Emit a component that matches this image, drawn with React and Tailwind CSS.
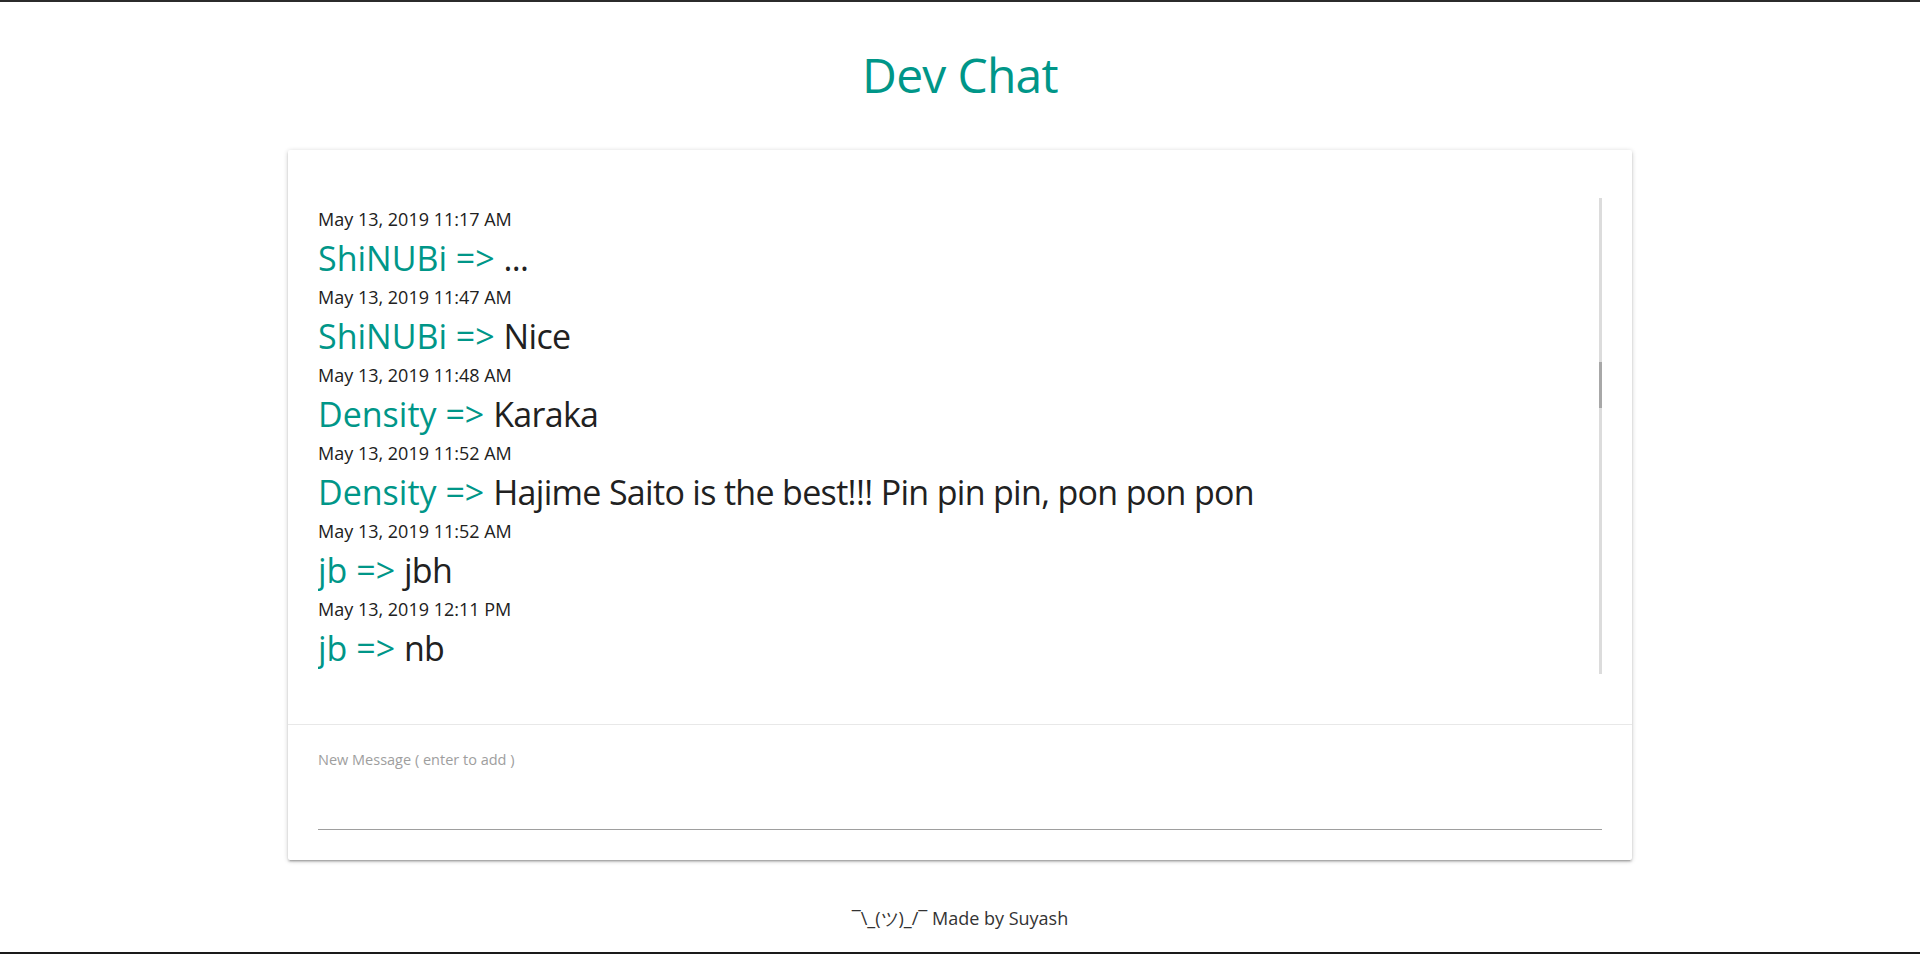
import React from 'react';

const messages = [
  { time: 'May 13, 2019 11:17 AM', user: 'ShiNUBi', text: '...' },
  { time: 'May 13, 2019 11:47 AM', user: 'ShiNUBi', text: 'Nice' },
  { time: 'May 13, 2019 11:48 AM', user: 'Density', text: 'Karaka' },
  { time: 'May 13, 2019 11:52 AM', user: 'Density', text: 'Hajime Saito is the best!!! Pin pin pin, pon pon pon' },
  { time: 'May 13, 2019 11:52 AM', user: 'jb', text: 'jbh' },
  { time: 'May 13, 2019 12:11 PM', user: 'jb', text: 'nb' },
];

const Message = ({ time, user, text }) => (
  <div className="flex flex-col">
    <div className="text-[18px] leading-[26px] text-[#212121]">{time}</div>
    <div className="text-[34px] leading-[52px] text-[#212121] whitespace-nowrap">
      <span className="text-[#009688]">{user} =&gt;</span>{' '}
      <span className="tracking-[-0.02em]">{text}</span>
    </div>
  </div>
);

const App = () => {
  return (
    <div className="flex flex-col min-h-screen bg-white border-t-2 border-b-2 border-t-[#2b2b2b] border-b-[#1a1a1a] font-['Open_Sans',sans-serif]">
      <h1 className="mt-[49px] text-center text-[48px] leading-[48px] tracking-[-0.015em] text-[#009688]">Dev Chat</h1>

      <div className="mt-[51px] mx-auto w-[1344px] bg-white rounded-[2px] shadow-[0_2px_2px_0_rgba(0,0,0,0.14),0_3px_1px_-2px_rgba(0,0,0,0.12),0_1px_5px_0_rgba(0,0,0,0.2)]">
        <div className="px-[30px] pt-[48px] pb-[50px]">
          <div className="flex h-[476px]">
            <div className="flex-1 flex flex-col pt-2 overflow-hidden">
              {messages.map((m, i) => (
                <Message key={i} {...m} />
              ))}
            </div>
            <div className="w-[3px] h-full bg-[#dcdcdc]">
              <div className="mt-[164px] h-[46px] bg-[#a8a8a8]"></div>
            </div>
          </div>
        </div>

        <div className="border-t border-[#e8e8e8] px-[30px] pt-[25px] pb-[30px]">
          <label className="block text-[14.5px] leading-[20px] text-[#9e9e9e]">New Message ( enter to add )</label>
          <input type="text" className="block w-full h-[60px] border-b border-[#9e9e9e] outline-none bg-transparent text-[16px]" />
        </div>
      </div>

      <footer className="mt-[46px] text-center text-[18px] leading-[24px] text-[#333]">
        ¯\_(ツ)_/¯ Made by Suyash
      </footer>
    </div>
  );
};

export default App;
